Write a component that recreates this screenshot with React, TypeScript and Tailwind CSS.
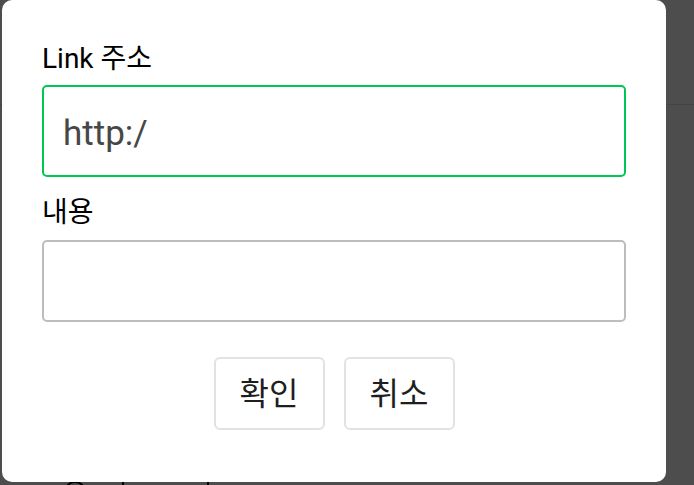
import React from "react";

export default function App() {
  return (
    <div className="relative w-[694px] h-[485px] overflow-hidden bg-[#4d4d4d] font-['Roboto','Noto_Sans_CJK_KR',sans-serif]">
      {/* page behind the dialog */}
      <div className="absolute left-0 top-[104px] w-full h-px bg-[#444444]" />
      <div className="absolute left-[64px] top-[481px] w-[22px] h-[22px] rounded-full border-2 border-black" />
      <div className="absolute left-[122px] top-[482px] w-[2px] h-[4px] bg-black" />
      <div className="absolute left-[207px] top-[482px] w-[2px] h-[4px] bg-black" />

      {/* dialog */}
      <div className="absolute left-[2px] top-0 w-[664px] h-[482px] rounded-[10px] bg-white px-[40px] pt-[44px] flex flex-col">
        <label className="block text-[28px] leading-[30px] text-black">Link 주소</label>
        <input
          readOnly
          value="http:/"
          className="mt-[11px] h-[92px] w-full rounded-[5px] border-2 border-[#00c753] pl-[19px] pt-[4px] text-[35px] text-[#474747] outline-none bg-white font-['Roboto','Noto_Sans_CJK_KR',sans-serif]"
        />
        <label className="mt-[21px] block text-[28px] leading-[30px] text-black">내용</label>
        <textarea
          readOnly
          className="mt-[12px] h-[82px] w-full resize-none rounded-[5px] border-2 border-[#bdbdbd] outline-none bg-white"
        />
        <div className="mt-[35px] flex justify-center gap-[19px]">
          <button className="w-[111px] h-[73px] rounded-[6px] border-2 border-[#e2e2e2] bg-white text-[32px] text-[#1e1e1e]">
            확인
          </button>
          <button className="w-[111px] h-[73px] rounded-[6px] border-2 border-[#e2e2e2] bg-white text-[32px] text-[#1e1e1e]">
            취소
          </button>
        </div>
      </div>
    </div>
  );
}
